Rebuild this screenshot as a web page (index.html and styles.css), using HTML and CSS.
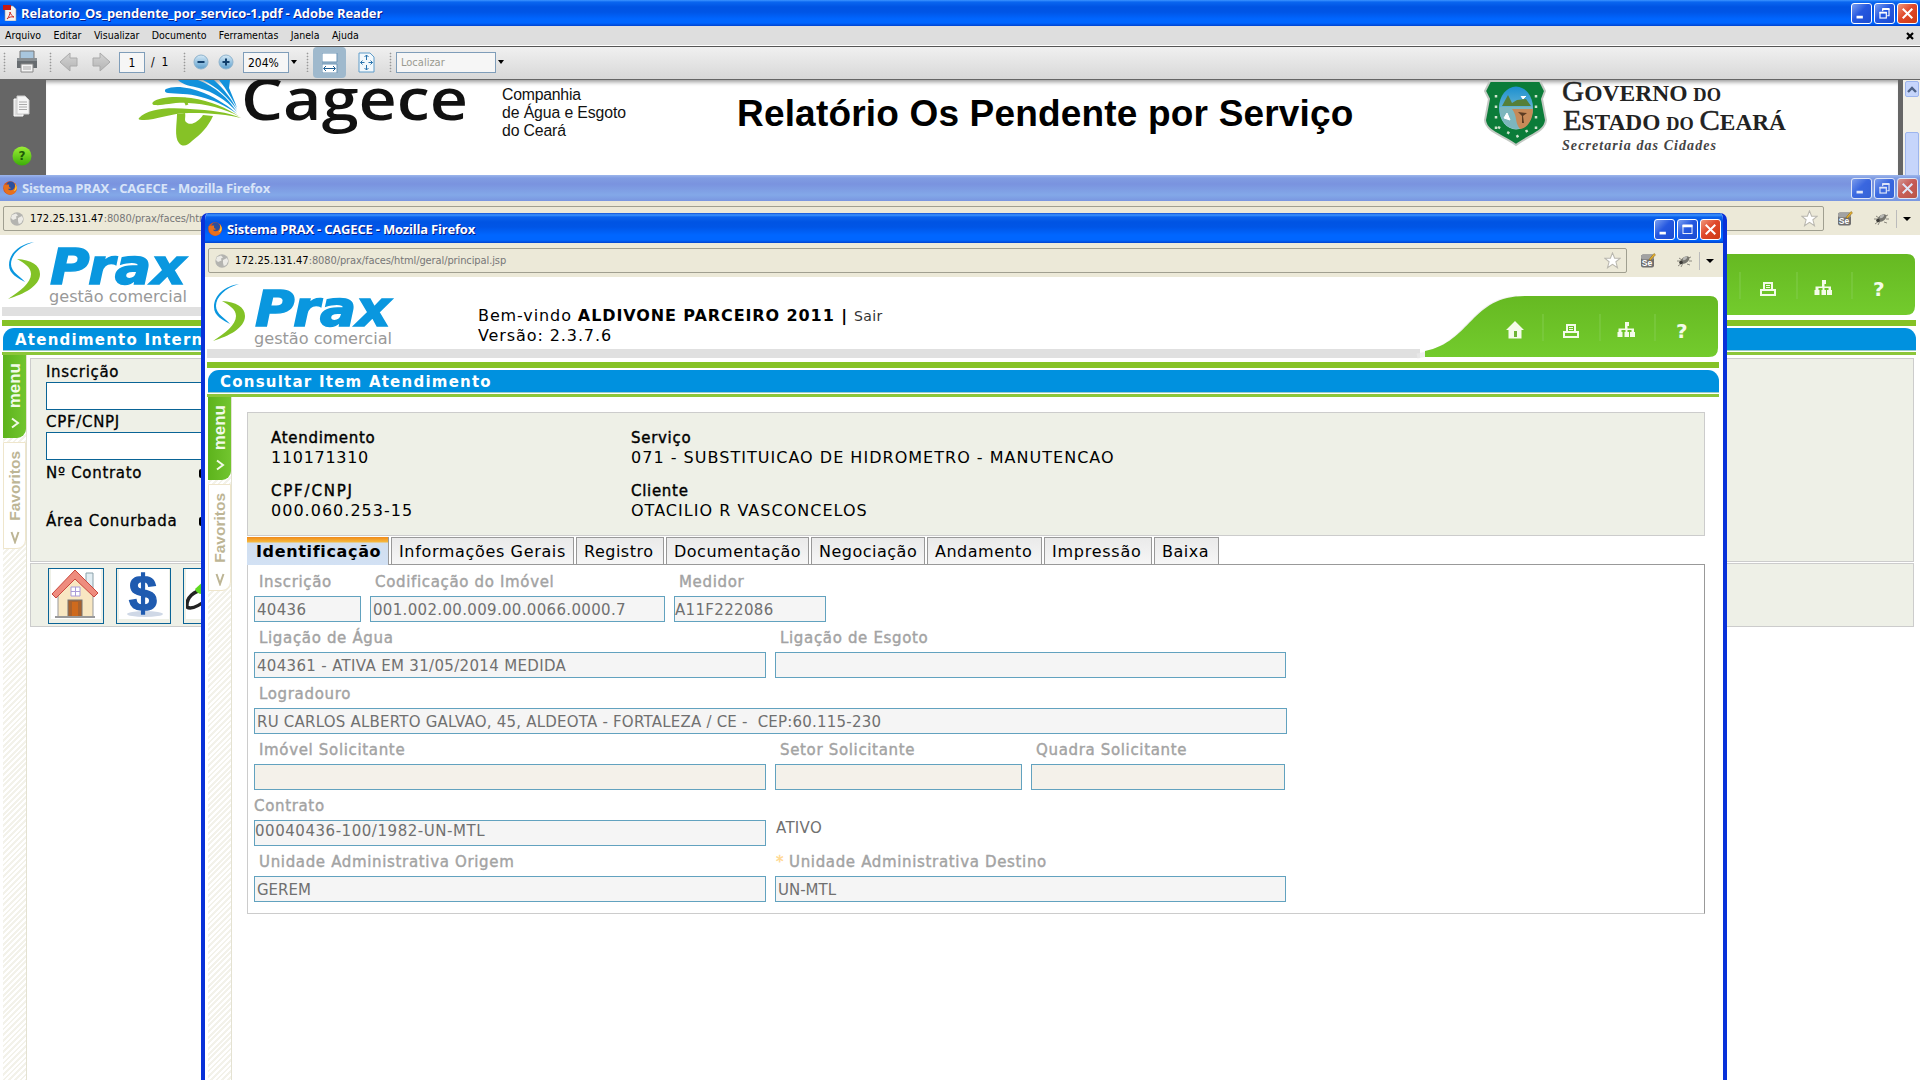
FILE: index.html
```html
<!DOCTYPE html>
<html lang="pt-BR">
<head>
<meta charset="utf-8">
<title>Sistema PRAX - CAGECE</title>
<link rel="stylesheet" href="styles.css">
</head>
<body>
<svg class="defs" width="0" height="0">
  <defs>
    <linearGradient id="g-green" x1="0" y1="0" x2="0" y2="1"><stop offset="0" stop-color="#66b922"/><stop offset="1" stop-color="#73cb2d"/></linearGradient>
    <linearGradient id="g-orb" x1="0" y1="0" x2="0" y2="1"><stop offset="0" stop-color="#d5e9f6"/><stop offset="1" stop-color="#5d9fcd"/></linearGradient>
    <linearGradient id="g-arrow" x1="0" y1="0" x2="0" y2="1"><stop offset="0" stop-color="#d4d4d4"/><stop offset="1" stop-color="#b4b4b4"/></linearGradient>
    <linearGradient id="g-sky" x1="0" y1="0" x2="0" y2="1"><stop offset="0" stop-color="#1b8fd0"/><stop offset="1" stop-color="#a9d6d8"/></linearGradient>
    <linearGradient id="g-help" x1="0" y1="0" x2="0" y2="1"><stop offset="0" stop-color="#9bee35"/><stop offset="1" stop-color="#3cae08"/></linearGradient>
  </defs>
  <symbol id="firefox" viewBox="0 0 14 14">
    <circle cx="7" cy="7" r="6.8" fill="#d8501a"/><circle cx="7.6" cy="5.2" r="4.6" fill="#2b4f9e"/>
    <path d="M.6 4C.2 9 3 13.6 7.4 13.7c4 0 6.6-3.300 6.400-7.200-.1-2-1-3.700-2.300-4.800 1 2.500.6 5-1 6.600-1.700 1.600-4.500 1.300-5.500-.6 1.300.3 2.300 0 3-.8C6 6.500 5.500 5 6.300 3.700 4.300 3.300 2 3.500.6 4z" fill="#e8701c"/>
    <path d="M12 3c1 2.500.4 5.600-1.600 7.200 2-.2 3-1.500 3.300-3.200C13.800 5.400 13 4 12 3z" fill="#fbcf3a"/>
  </symbol>
  <symbol id="globe" viewBox="0 0 14 14">
    <circle cx="7" cy="7" r="6.7" fill="#b4b4b0"/><path d="M2 3l4-1.500 2 2-2 1 .5 2L3 8 1 6zM8 6l4-2 1.300 3-2 4-2.500 1L8 9z" fill="#ecebe6"/>
  </symbol>
  <symbol id="star" viewBox="0 0 16 16"><path d="M8 .8l2 5h5.400l-4.200 3.400 1.500 5.600L8 11.600l-4.700 3.200 1.500-5.600L.6 5.800H6z" fill="#fff" stroke="#b9b7ae"/></symbol>
  <symbol id="selenium" viewBox="0 0 16 16"><rect x="1" y="1.500" width="13" height="13" rx="2" fill="#6f6f6f"/><rect x="1" y="1.500" width="13" height="5" rx="2" fill="#a2a2a2"/><text x="1.800" y="13" font-family="Liberation Sans" font-weight="bold" font-size="8.500" fill="#fff">Se</text><path d="M9 6.500l5-6 1.500 1.300-5 5.500z" fill="#e8b12c" stroke="#7a5a12" stroke-width=".5"/></symbol>
  <symbol id="bug" viewBox="0 0 16 14"><path d="M1 7h4M2 12l4-3M5 13l2-4M11 10l3 1M12 4l3-1M13 7h3M3 4l3 2" stroke="#8d8a80" fill="none"/><ellipse cx="9" cy="6" rx="5" ry="3" transform="rotate(-35 9 6)" fill="#77766f"/><ellipse cx="10" cy="4.500" rx="2.500" ry="1.500" transform="rotate(-35 9 6)" fill="#b7b7b3"/><circle cx="5" cy="8.500" r="1.800" fill="#3c3b37"/></symbol>
  <symbol id="min" viewBox="0 0 21 21"><rect x="5" y="13" width="7" height="3" fill="#fff"/></symbol>
  <symbol id="restore" viewBox="0 0 21 21"><path d="M8.500 8V6h7v7h-2" fill="none" stroke="#fff" stroke-width="1.300"/><path d="M8 5.500h8" stroke="#fff" stroke-width="2"/><rect x="5.500" y="9.500" width="7" height="6" fill="none" stroke="#fff" stroke-width="1.300"/><path d="M5 9.500h8" stroke="#fff" stroke-width="2"/></symbol>
  <symbol id="maxi" viewBox="0 0 21 21"><rect x="5.500" y="6" width="10" height="9" fill="none" stroke="#fff"/><path d="M5 6.500h11" stroke="#fff" stroke-width="3"/></symbol>
  <symbol id="close" viewBox="0 0 21 21"><path d="M6 6l9 9M15 6l-9 9" stroke="#fff" stroke-width="2.200" stroke-linecap="square"/></symbol>
  <symbol id="prax" viewBox="0 0 190 70">
    <path d="M26 3C12 7 3 16 3 25c0 8 9 12 14 18C10 39 1 35 1 26 1 14 12 5 26 3z" fill="#0a97df"/>
    <path d="M9 20c14 1 23 6 23 15 0 12-16 20-32 25 12-8 23-16 23-25 0-7-7-11-14-15z" fill="#82c226"/>
    <text x="42" y="45" class="prax-word" textLength="136" lengthAdjust="spacingAndGlyphs">Prax</text>
    <text x="41" y="63" class="prax-sub" textLength="138" lengthAdjust="spacingAndGlyphs">gestão comercial</text>
  </symbol>
  <symbol id="banner" viewBox="0 0 310 72">
    <path d="M8 66C60 58 60 12 108 8" fill="none" stroke="#e9e9e9" stroke-width="5" opacity=".7"/>
    <path d="M16 67V61C62 52 62 6 116 6h185q8 0 8 8v44q0 9-9 9H16z" fill="url(#g-green)"/>
    <path d="M134 24v27M191 24v27M246 24v27" stroke="#82cc4d"/>
    <g fill="#f4fbe9" transform="translate(0 -1)">
      <path d="M97 41l9-9 9 9h-2.500v8.500h-13V41z"/><rect x="105" y="42" width="3" height="6" fill="#6cb433"/>
      <path d="M157 35h10v7h3v7h-16v-7h3zM159 37v5h6v-5zM156 44v3h12v-3z" fill-rule="evenodd"/><path d="M160 38h4v1h-4zM160 40h4v1h-4z"/>
      <path d="M216 33h4v4h-1.500v2.500h6.500V43h1v5h-5v-5h1.500v-2h-4v2h1.500v5h-4.500v-5h1v-2h-4v2h1v5h-5v-5h1v-3.500h6.500V37H216z"/>
      <text x="267" y="49" class="help-mark">?</text>
    </g>
  </symbol>
</svg>

<section class="reader">
  <header class="titlebar">
    <svg class="pdf-icon" width="14" height="16" viewBox="0 0 14 16"><path d="M2 1h8l3 3v12H2z" fill="#f2f2f2" stroke="#999" stroke-width=".6"/><rect x="0" y="0" width="8" height="5" fill="#c51a12"/><path d="M4 14c2-2 3-5 3-7 1 3 2 4 4 5-3-.5-5 0-7 2z" fill="none" stroke="#cf2a20"/></svg>
    <span class="t-title">Relatorio_Os_pendente_por_servico-1.pdf - Adobe Reader</span>
    <span class="winbtns"><svg class="wb"><use href="#min"/></svg><svg class="wb"><use href="#restore"/></svg><svg class="wb red"><use href="#close"/></svg></span>
  </header>
  <nav class="menubar"><span>Arquivo</span><span>Editar</span><span>Visualizar</span><span>Documento</span><span>Ferramentas</span><span>Janela</span><span>Ajuda</span><svg class="docx" width="8" height="8" viewBox="0 0 8 8"><path d="M1 1l6 6M7 1L1 7" stroke="#000" stroke-width="2.200"/></svg></nav>
  <div class="toolbar">
    <i class="grip g1"></i>
    <svg class="printer" width="24" height="24" viewBox="0 0 24 24"><path d="M5 1h14v8H5z" fill="#a8c6de" stroke="#777"/><path d="M2 8h20v10H2z" fill="#676c70"/><path d="M2 8h20v3H2z" fill="#888e92"/><path d="M6 14h12v8H6z" fill="#f4f4f4" stroke="#888"/><path d="M8 17h8M8 19h8" stroke="#aaa"/></svg>
    <i class="grip g2"></i>
    <svg class="arr1" width="20" height="20" viewBox="0 0 20 20"><path d="M1 10l10-9v5h7v8h-7v5z" fill="url(#g-arrow)" stroke="#aaa"/></svg>
    <svg class="arr2" width="20" height="20" viewBox="0 0 20 20"><path d="M19 10L9 1v5H2v8h7v5z" fill="url(#g-arrow)" stroke="#aaa"/></svg>
    <span class="tb-in pg">1</span><span class="of">/&nbsp; 1</span>
    <i class="grip g3"></i>
    <svg class="orb o1" width="17" height="17" viewBox="0 0 17 17"><circle cx="8" cy="8" r="7" fill="url(#g-orb)" stroke="#8eb3cd"/><path d="M4.500 8h7" stroke="#123f6b" stroke-width="2"/></svg>
    <svg class="orb o2" width="17" height="17" viewBox="0 0 17 17"><circle cx="8" cy="8" r="7" fill="url(#g-orb)" stroke="#8eb3cd"/><path d="M4.500 8h7M8 4.500v7" stroke="#123f6b" stroke-width="2"/></svg>
    <span class="tb-in zoomv">204%</span><i class="caret"></i>
    <i class="grip g4"></i>
    <span class="selected"><svg width="16" height="20" viewBox="0 0 16 20"><path d="M0 0h15v9H0zM0 11h15v9H0z" fill="#fff" stroke="#6a93b5"/><path d="M2 15.500h11M4 13l-2.500 2.500L4 18M11 13l2.500 2.500L11 18" fill="none" stroke="#205f94"/></svg></span>
    <svg class="fit" width="17" height="21" viewBox="0 0 17 21"><path d="M1 1h11l4 4v15H1z" fill="#f2f8fc" stroke="#5e9cc9"/><path d="M8.500 3v5M6.500 5l2-2 2 2M8.500 18v-5M6.500 16l2 2 2-2M2.500 10.500h4M4.500 8.500l-2 2 2 2M14.500 10.500h-4M12.500 8.500l2 2-2 2" fill="none" stroke="#2873ad"/></svg>
    <i class="grip g5"></i>
    <span class="tb-in find">Localizar</span><i class="caret c2"></i>
  </div>
  <div class="pdf">
    <aside class="pdfside">
      <svg width="17" height="22" viewBox="0 0 17 22"><path d="M1 4h9v17H1z" fill="#ddd" stroke="#fff"/><path d="M4 1h8l4 4v14H4z" fill="#f6f6f6" stroke="#ccc"/><path d="M6 7h8M6 9.500h8M6 12h8M6 14.500h8" stroke="#aaa"/></svg>
      <svg width="20" height="20" viewBox="0 0 20 20"><circle cx="10" cy="10" r="9.500" fill="url(#g-help)"/><text x="6.500" y="14" font-family="DejaVu Sans" font-weight="bold" font-size="12" fill="#1d5a08">?</text></svg>
    </aside>
    <div class="page">
      <svg class="cagece" width="510" height="90" viewBox="130 80 510 90">
        <path d="M139 118C148 108 170 107 190 109c20 1 38 3 51 9-22-5-40-5-52-5-18 0-36 8-47 7-3 0-4-1-3-2z" fill="#86c226"/>
        <path d="M153 102c6-5 22-6 38-4 20 3 36 10 49 19-16-9-34-13-52-14-14-1-26 3-33 2-3 0-3-2-2-3z" fill="#86c226"/>
        <path d="M177 114c0 9-3 23 2 29 4 5 9 2 13-2 9-7 16-14 21-25l-10-1c-4 6-12 12-17 7-2-2 0-5-1-9z" fill="#86c226"/>
        <path d="M184 98l3 7" stroke="#86c226" stroke-width="3"/>
        <path d="M166 89c8-4 24-2 38 4 14 6 26 14 33 21-12-9-24-14-36-17-13-4-24-3-33-4-3 0-4-3-2-4zM178 80h20c18 7 30 18 39 32-12-13-24-20-38-24-8-2-16-3-21-8zM203 80h11c9 8 18 19 23 30-9-13-19-22-34-30zM219 80h11l-1 8c3 7 6 14 8 20-5-9-10-18-18-28z" fill="#1292dc"/>
        <text x="241" y="119.500" class="cagece-word" textLength="227" lengthAdjust="spacingAndGlyphs">Cagece</text>
        <g class="cagece-sub"><text x="502" y="100" textLength="79">Companhia</text><text x="502" y="118" textLength="124">de Água e Esgoto</text><text x="502" y="136" textLength="64">do Ceará</text></g>
      </svg>
      <h1>Relatório Os Pendente por Serviço</h1>
      <svg class="governo" width="320" height="90" viewBox="1480 80 320 90">
        <path d="M1490 81h50l5 10-3 8 4 21c-1 12-17 15-30 25-13-10-30-13-31-25l4-21-4-8z" fill="#0b7c39" stroke="#c3c9c3" stroke-width="2"/>
        <ellipse cx="1516" cy="108" rx="17" ry="21.500" fill="url(#g-sky)"/>
        <path d="M1500 107h32v5c-1 11-8 17-16 17s-15-7-16-17z" fill="#7db6bd"/><path d="M1512 109h21c0 12-7 20-13 20-6-8-2-12-8-20z" fill="#c78a58"/><path d="M1502 106l6-11 4 8 5-3 9-1 5 7z" fill="#557f38"/><path d="M1521 96l2 3 3-3M1504 118l3-5 3 7z" stroke="#fff" fill="#fff"/><path d="M1518 112l9 1-4 3 1 7h-2v-7z" fill="#5b3b22"/>
        <path d="M1496 95v40M1536 95v40M1498 127l18 10 18-10" fill="none" stroke="#cfe3cd" stroke-width="2.500" stroke-dasharray="2.500 8"/>
        <g class="gov"><text x="1562" y="101" textLength="159" lengthAdjust="spacingAndGlyphs"><tspan class="cap">G</tspan>OVERNO <tspan class="sm">DO</tspan></text><text x="1563" y="130" textLength="223" lengthAdjust="spacingAndGlyphs"><tspan class="cap">E</tspan>STADO <tspan class="sm">DO</tspan> <tspan class="cap">C</tspan>EARÁ</text><text x="1562" y="150" class="sec" textLength="154" lengthAdjust="spacing">Secretaria das Cidades</text></g>
      </svg>
    </div>
    <div class="scroll"><span class="up"><svg width="10" height="7" viewBox="0 0 10 7"><path d="M1 6l4-4 4 4" fill="none" stroke="#4d6185" stroke-width="2.400"/></svg></span><span class="thumb"></span></div>
  </div>
</section>

<section class="window back">
  <header class="titlebar"><svg class="fx"><use href="#firefox"/></svg><span class="t-title">Sistema PRAX - CAGECE - Mozilla Firefox</span><span class="winbtns"><svg class="wb"><use href="#min"/></svg><svg class="wb"><use href="#restore"/></svg><svg class="wb red"><use href="#close"/></svg></span></header>
  <div class="address"><div class="field"><svg class="gl"><use href="#globe"/></svg><span class="url"><b>172.25.131.47</b>:8080/prax/faces/html</span><svg class="st"><use href="#star"/></svg></div><svg class="se"><use href="#selenium"/></svg><svg class="bg"><use href="#bug"/></svg><i class="sep"></i><i class="caret"></i></div>
  <div class="app">
    <div class="masthead"><svg class="prax"><use href="#prax"/></svg><svg class="banner"><use href="#banner"/></svg></div>
    <div class="greenline"></div>
    <h2>Atendimento Interno</h2>
    <div class="underline"></div>
    <div class="main">
      <aside class="rail"><div class="menu"><span>menu</span><svg width="10" height="12" viewBox="0 0 10 12"><path d="M2 1.500l6 4.500-6 4.500" fill="none" stroke="#f2fae8" stroke-width="2"/></svg></div><div class="fav"><span>Favoritos</span><svg width="10" height="14" viewBox="0 0 10 14"><path d="M1.500 2L5 12l3.500-10" fill="none" stroke="#bdb595" stroke-width="2"/></svg></div></aside>
      <div class="work">
        <div class="box form"><label>Inscrição</label><span class="blank"></span><label>CPF/CNPJ</label><span class="blank"></span><label class="l3">Nº Contrato<i class="dot"></i></label><label class="l4">Área Conurbada<i class="dot"></i></label></div>
        <div class="box tools">
          <span><svg width="50" height="50" viewBox="0 0 50 50"><path d="M0 0h50v50H0z" fill="#fff"/><path d="M35 4h7v16h-7z" fill="#e3eef3" stroke="#8ba1aa"/><path d="M7 22L24 6l18 17v25H7z" fill="#f8e7c2" stroke="#999"/><path d="M1 25L24 1l23 23-4 4L24 10 5 29z" fill="#ee8c7e" stroke="#c9473d"/><rect x="17" y="31" width="14" height="17" fill="#a9622e" stroke="#777"/><path d="M21 33h6v14h-6z" fill="#cf6a1d"/><path d="M20 18h9v9h-9zM24.500 18v9M20 22.500h9" fill="#fff" stroke="#a99bd8"/><path d="M4 48h40" stroke="#999" stroke-width="2"/></svg></span>
          <span><svg width="50" height="50" viewBox="0 0 50 50"><path d="M0 0h50v50H0z" fill="#fff"/><ellipse cx="26" cy="45" rx="18" ry="3" fill="#cfd8e6"/><text x="10" y="41" font-family="Liberation Sans" font-weight="bold" font-size="50" fill="#1f5bb0" stroke="#1f5bb0" stroke-width="1.500">$</text></svg></span>
          <span><svg width="50" height="50" viewBox="0 0 50 50"><path d="M0 0h50v50H0z" fill="#fff"/><path d="M19 20C8 22 0 28 1 38c4 3 12-1 22-9" fill="none" stroke="#222" stroke-width="3.500"/><path d="M9 20L20 10v14c-5 2-9 1-11-4z" fill="#5fd820"/></svg></span>
        </div>
      </div>
    </div>
  </div>
</section>

<section class="window front">
  <header class="titlebar"><svg class="fx"><use href="#firefox"/></svg><span class="t-title">Sistema PRAX - CAGECE - Mozilla Firefox</span><span class="winbtns"><svg class="wb"><use href="#min"/></svg><svg class="wb"><use href="#maxi"/></svg><svg class="wb red"><use href="#close"/></svg></span></header>
  <div class="address"><div class="field"><svg class="gl"><use href="#globe"/></svg><span class="url"><b>172.25.131.47</b>:8080/prax/faces/html/geral/principal.jsp</span><svg class="st"><use href="#star"/></svg></div><svg class="se"><use href="#selenium"/></svg><svg class="bg"><use href="#bug"/></svg><i class="sep"></i><i class="caret"></i></div>
  <div class="app">
    <div class="masthead"><svg class="prax"><use href="#prax"/></svg>
      <div class="welcome"><div>Bem-vindo <b>ALDIVONE PARCEIRO 2011 |</b> <span class="sair">Sair</span></div><div>Versão: 2.3.7.6</div></div>
      <svg class="banner"><use href="#banner"/></svg></div>
    <div class="greenline"></div>
    <h2>Consultar Item Atendimento</h2>
    <div class="underline"></div>
    <div class="main">
      <aside class="rail"><div class="menu"><span>menu</span><svg width="10" height="12" viewBox="0 0 10 12"><path d="M2 1.500l6 4.500-6 4.500" fill="none" stroke="#f2fae8" stroke-width="2"/></svg></div><div class="fav"><span>Favoritos</span><svg width="10" height="14" viewBox="0 0 10 14"><path d="M1.500 2L5 12l3.500-10" fill="none" stroke="#bdb595" stroke-width="2"/></svg></div></aside>
      <div class="work">
        <dl class="box summary">
          <div><dt>Atendimento</dt><dd class="narrow">110171310</dd></div>
          <div><dt>Serviço</dt><dd>071 - SUBSTITUICAO DE HIDROMETRO - MANUTENCAO</dd></div>
          <div><dt class="wide">CPF/CNPJ</dt><dd>000.060.253-15</dd></div>
          <div><dt>Cliente</dt><dd>OTACILIO R VASCONCELOS</dd></div>
        </dl>
        <nav class="tabs"><span class="on">Identificação</span><span>Informações Gerais</span><span>Registro</span><span>Documentação</span><span>Negociação</span><span>Andamento</span><span>Impressão</span><span>Baixa</span></nav>
        <div class="tabbody">
          <div class="row r1"><label>Inscrição</label><label>Codificação do Imóvel</label><label>Medidor</label><output>40436</output><output>001.002.00.009.00.0066.0000.7</output><output class="tight">A11F222086</output></div>
          <div class="row r2"><label>Ligação de Água</label><label>Ligação de Esgoto</label><output>404361 - ATIVA EM 31/05/2014 MEDIDA</output><output></output></div>
          <div class="row r3"><label>Logradouro</label><output class="addr">RU CARLOS ALBERTO GALVAO, 45, ALDEOTA - FORTALEZA / CE - &nbsp;CEP:60.115-230</output></div>
          <div class="row r4"><label>Imóvel Solicitante</label><label>Setor Solicitante</label><label>Quadra Solicitante</label><output class="cream"></output><output class="cream"></output><output class="cream"></output></div>
          <div class="row r5"><label class="flush">Contrato</label><label></label><output class="tight high">00040436-100/1982-UN-MTL</output><span class="plain">ATIVO</span></div>
          <div class="row r6"><label>Unidade Administrativa Origem</label><label class="req"><i>*</i>Unidade Administrativa Destino</label><output class="code">GEREM</output><output class="code">UN-MTL</output></div>
        </div>
      </div>
    </div>
  </div>
</section>
</body>
</html>
```
FILE: styles.css
```css
* { box-sizing: border-box; }
body { margin: 0; width: 1920px; height: 1080px; overflow: hidden; position: relative; background: #fff; font-family: "DejaVu Sans", Verdana, sans-serif; color: #000; }
i { font-style: normal; }
svg { display: block; flex: none; }
.defs { position: absolute; }

/* Window chrome */
.titlebar { display: flex; align-items: center; height: 26px; padding: 0 2px 0 3px; color: #fff; background: linear-gradient(#3d95ff 0, #0a66f0 2px, #0054e3 7px, #0055e6 12px, #0066ff 19px, #0066ff 23px, #0043cf 26px); }
.t-title { font: bold 13px/26px "Open Sans", sans-serif; letter-spacing: -.2px; text-shadow: 1px 1px 0 #0a1883; white-space: nowrap; }
.pdf-icon { margin: 0 4px 0 0; }
.reader .t-title { letter-spacing: -.1px; }
.fx { width: 14px; height: 14px; margin-right: 5px; }
.winbtns { display: flex; gap: 2px; margin-left: auto; }
.wb { width: 21px; height: 21px; border: 1px solid #fff; border-radius: 3px; background: linear-gradient(135deg, #7b9ff0, #2558e0 45%, #1c4cd0); }
.wb.red { background: linear-gradient(135deg, #f0987c, #e0482a 45%, #cc3a14); }

/* PDF reader */
.reader { height: 175px; overflow: hidden; }
.menubar { display: flex; height: 20px; padding: 0 5px; background: #dedede; border-bottom: 1px solid #fff; font: 10.500px/19px "DejaVu Sans Condensed", Tahoma, sans-serif; gap: 12.400px; }
.docx { margin: 6px 1px 0 auto; }
.toolbar { display: flex; align-items: center; height: 34px; padding: 0 0 2px 3px; background: linear-gradient(#f0f0f0, #d8d8d8); border-top: 1px solid #555; border-bottom: 1px solid #666; font: 12px/20px "DejaVu Sans Condensed", Tahoma, sans-serif; }
.grip { width: 3px; height: 20px; background: radial-gradient(circle, #999 40%, transparent 50%) 0 0 / 3px 3px; }
.printer { margin: 0 10px 0 9px; }
.arr1 { margin-left: 7px; }
.arr2 { margin-left: 12px; }
.tb-in { height: 21px; background: #f6f6f6; border: 1px solid #7f9db9; line-height: 20px; }
.pg { width: 26px; margin-left: 8px; text-align: center; }
.of { width: 38px; padding-left: 6px; }
.orb { margin-left: 7px; }
.o2 { margin-left: 8px; }
.zoomv { width: 46px; margin-left: 8px; padding-left: 4px; }
.caret { border: 3px solid transparent; border-top: 4px solid #000; border-bottom: 0; margin-left: 2px; }
.g4 { margin-left: 9px; }
.selected { display: flex; width: 33px; height: 31px; margin-left: 4px; padding: 6px 9px; background: #9fb9cd; border-radius: 4px; }
.fit { margin: 0 14px 0 12px; }
.find { width: 100px; margin-left: 4px; padding-left: 4px; color: #9a9a90; font-size: 11px; }
.pdf { display: flex; height: 95px; background: #fff; }
.pdfside { display: flex; flex-direction: column; align-items: center; gap: 29px; width: 46px; padding: 15px 3px 0 0; background: #666; }
.page { display: flex; flex: 1; padding-left: 84px; box-shadow: inset 0 5px 4px -3px #999; }
.cagece-word { font: 600 57px "Open Sans", sans-serif; fill: #111; }
.cagece-sub { font: 15.800px "Liberation Sans", Arial, sans-serif; fill: #111; }
.page h1 { flex: none; margin: 0 0 0 97px; width: 743px; padding-top: 13px; font: bold 37px/42px "Liberation Sans", Arial, sans-serif; letter-spacing: .18px; white-space: nowrap; }
.gov { font: bold 23px "Liberation Serif", serif; fill: #222; }
.gov .cap { font-size: 30px; font-weight: normal; stroke: #222; stroke-width: .5px; }
.gov .sm { font-size: 18px; }
.gov .sec { font: italic bold 14px "Liberation Serif", serif; fill: #444; }
.scroll { width: 22px; border-left: 5px solid #666; background: #f2f0e8; padding: 1px 1px 0 2px; }
.up, .thumb { display: flex; justify-content: center; align-items: center; background: #c6d5fb; border: 1px solid #9db5ee; border-radius: 2px; height: 16px; }
.thumb { height: 60px; margin-top: 35px; }

/* Browser windows */
.window { position: absolute; isolation: isolate; }
.address { display: flex; align-items: center; height: 34px; background: #ece9d8; padding: 1px 0 0 3px; }
.field { display: flex; align-items: center; height: 25px; flex: 1; padding: 0 5px 0 6px; border: 1px solid #a09f90; border-radius: 2px; }
.gl { width: 14px; height: 14px; margin-right: 6px; }
.url { font: 11px/22px "DejaVu Sans Condensed", Tahoma, sans-serif; letter-spacing: -.1px; color: #777; white-space: nowrap; }
.url b { font-weight: normal; letter-spacing: .1px; color: #000; }
.st { width: 17px; height: 17px; margin-left: auto; }
.se { width: 16px; height: 16px; margin-left: 13px; }
.bg { width: 16px; height: 14px; margin-left: 20px; }
.sep { width: 1px; height: 18px; background: #bbb; margin-left: 7px; }
.address .caret { margin: 0 9px 0 6px; border-width: 4px 4px 0; }

/* Prax application */
.app { padding: 0 4px 0 2px; background: #fff; }
.masthead { position: relative; display: flex; height: 85px; align-items: flex-start; }
.masthead::after { content: ""; position: absolute; left: 0; right: 299px; top: 72px; height: 9px; background: #e0e0e0; }
.prax { width: 190px; height: 70px; margin: 4px 0 0 6px; }
.prax-word { font: italic bold 50px "DejaVu Sans", sans-serif; fill: #0a97df; stroke: #0a97df; stroke-width: 1.500px; }
.prax-sub { font: 16px "DejaVu Sans", sans-serif; fill: #999; }
.help-mark { font: bold 20px "DejaVu Sans", sans-serif; }
.banner { width: 310px; height: 72px; margin: 13px 0 0 auto; z-index: 1; }
.greenline { height: 6px; background: #86c226; }
.app h2 { margin: 2px 0 0 1px; height: 23px; padding-left: 12px; background: #0091df; border-radius: 11px 11px 0 0; color: #fff; font: bold 15px/24px "DejaVu Sans", sans-serif; letter-spacing: 1.230px; border-bottom: 1px solid #9cc; white-space: nowrap; }
.underline { height: 3px; margin-top: 1px; background: #8cc63a; }
.main { display: flex; margin-left: 1px; }
.rail { width: 24px; flex: none; height: 726px; background: repeating-linear-gradient(135deg, #f3f2ea 0 2px, #fff 2px 4px); border-right: 1px solid #e4e2d2; }
.rail div { display: flex; flex-direction: column; align-items: center; justify-content: space-between; width: 23px; border-radius: 0 0 9px 0; }
.rail span { writing-mode: vertical-rl; transform: rotate(180deg); font: bold 17px/22px "Liberation Sans", sans-serif; white-space: nowrap; }
.rail .menu { height: 83px; padding: 8px 0 9px; color: #f2fae8; background: linear-gradient(90deg, #5db31c, #72c52f); }
.rail .fav { height: 107px; margin-top: 4px; padding: 8px 0 4px; color: #bdb595; background: #fff; border: 1px solid #efe6cc; }
.rail .fav span { font-size: 15.500px; line-height: 21px; }
.work { flex: 1; }
.box { background: #eef0e7; border: 1px solid #ccc; }

/* Background window */
.back { left: 0; top: 175px; width: 1920px; height: 905px; overflow: hidden; background: #fff; }
.back .titlebar { background: linear-gradient(#9db6ec 0, #809ce2 3px, #7a93df 9px, #83a8e8 20px, #7a96e0 26px); color: #d8e4f8; }
.back .t-title { text-shadow: none; }
.back .wb { opacity: .75; }
.back .work { padding: 3px 2px 0 3px; }
.form { height: 204px; padding: 4px 15px; display: flex; flex-direction: column; }
.form label { font: 15px/19px "DejaVu Sans", sans-serif; letter-spacing: .7px; -webkit-text-stroke: .3px; white-space: nowrap; }
.blank { height: 28px; width: 400px; flex: none; border: 1px solid #0a6496; background: #fff; margin-bottom: 3px; }
.form .l3 { margin-top: 1px; display: flex; }
.form .l4 { margin-top: 29px; display: flex; }
.dot { width: 8px; height: 9px; margin: 5px 0 0 57px; background: #000; border-radius: 2px; }
.l4 .dot { margin-left: 22px; }
.tools { display: flex; gap: 12px; height: 64px; margin-top: 1px; padding: 4px 17px; }
.tools span { width: 55.500px; height: 56px; border: 1px solid #0a6496; padding: 0 2px; background: #eef0e7; }

/* Foreground window */
.front { left: 201px; top: 213px; width: 1526px; height: 867px; overflow: hidden; border: solid #0831d9; border-width: 0 4px; border-radius: 7px 7px 0 0; background: #fff; }
.front .titlebar { height: 30px; margin: 0 -4px; padding: 2px 6px 0 7px; background: linear-gradient(#0f4fd6 0, #3d95ff 2px, #0a62ec 4px, #0054e3 9px, #0055e6 14px, #0066ff 22px, #0066ff 27px, #0043cf 30px); }
.front .t-title { line-height: 28px; }
.welcome { margin: 29px 0 0 75px; font: 16px/20px "DejaVu Sans", sans-serif; letter-spacing: .9px; white-space: nowrap; }
.sair { font-size: 14px; letter-spacing: .4px; color: #333; }
.front .work { padding: 15px 14px 0 15px; }
.summary { display: grid; grid-template-columns: 360px 1fr; grid-template-rows: 53px 53px; margin: 0; height: 124px; padding: 15px 23px; }
.summary dt, .summary dd { margin: 0; font: 16px/19px "DejaVu Sans", sans-serif; letter-spacing: 1.020px; white-space: nowrap; }
.summary .narrow { letter-spacing: .7px; }
.summary dt { font-size: 15px; -webkit-text-stroke: .4px; line-height: 20px; letter-spacing: .7px; }
.summary .wide { letter-spacing: 1.800px; }
.tabs { display: flex; gap: 2px; margin-top: 1px; height: 28px; }
.tabs > span { border: 1px solid #999; height: 28px; background: linear-gradient(#eaeaea, #f6f6f6); font: 16px/28px "DejaVu Sans", sans-serif; letter-spacing: .5px; padding-left: 7px; white-space: nowrap; position: relative; width: 183px; }
.tabs > .on { font-weight: bold; border: 0; border-right: 1px solid #999; background: linear-gradient(#ef8a1c 0, #f6b93c 5px, #d2dfef 6px, #d2e1f4 28px); z-index: 1; padding-left: 9px; width: 142px; line-height: 30px; letter-spacing: .65px; }
.tabs > :nth-child(2) { letter-spacing: .65px; }
.tabs > :nth-child(3) { width: 88px; }
.tabs > :nth-child(4) { width: 143px; }
.tabs > :nth-child(5) { width: 114px; }
.tabs > :nth-child(6) { width: 115px; }
.tabs > :nth-child(7) { width: 108px; letter-spacing: .75px; }
.tabs > :nth-child(8) { width: 65px; }
.tabbody { margin-top: -1px; height: 350px; border: 1px solid #ccc; border-top-color: #999; border-right-color: #999; padding: 7px 6px; }
.row { display: grid; grid-template-rows: 20px 26px; row-gap: 4px; column-gap: 9px; margin-bottom: 6px; }
.row label { padding-left: 5px; font: 15px/20px "DejaVu Sans", sans-serif; letter-spacing: .66px; color: #a3a3a3; -webkit-text-stroke: .4px; white-space: nowrap; }
.row .flush { padding-left: 0; }
.row .req { padding-left: 1px; }
.req i { display: inline-block; width: 13px; color: #ffd88e; }
.row output { border: 1px solid #62a2bf; background: #f5f5f5; padding-left: 2px; font: 15px/26px "DejaVu Sans", sans-serif; letter-spacing: .33px; color: #707070; white-space: nowrap; }
.row .tight { padding-left: 0; }
.row .high { line-height: 20px; letter-spacing: .54px; }
.row .addr { letter-spacing: .22px; }
.row .code { letter-spacing: 0; }
.row .cream { background: #f4f1ea; }
.plain { font: 15px/20px "DejaVu Sans", sans-serif; letter-spacing: .3px; color: #707070; padding-left: 1px; margin-top: -2px; }
.r1 { grid-template-columns: 107px 295px 152px; }
.r2, .r5, .r6 { grid-template-columns: 512px 511px; }
.r3 { grid-template-columns: 1033px; }
.r4 { grid-template-columns: 512px 247px 254px; }
```
